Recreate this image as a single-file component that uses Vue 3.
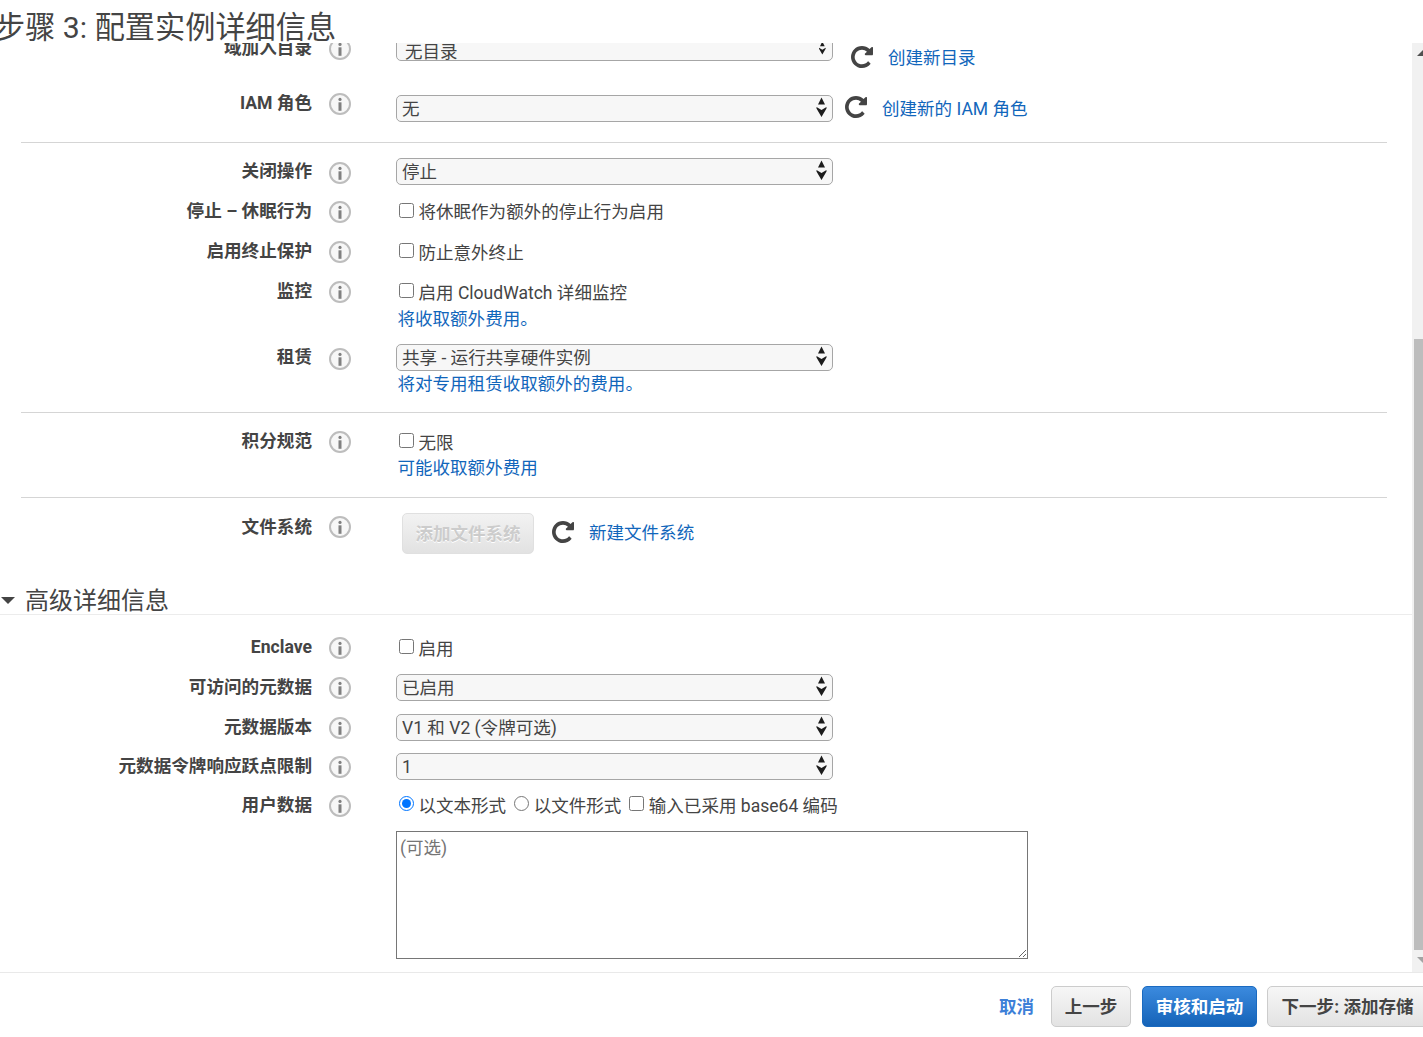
<script setup>
import { ref } from 'vue'
const domain = ref('无目录')
const tips = ['无目录']
</script>

<template>
  <div class="page">
    <svg class="defs" aria-hidden="true">
      <symbol id="info" viewBox="0 0 22 22">
        <circle cx="11" cy="11" r="10" fill="#f7f7f7" stroke="#bdbdbd" stroke-width="2" />
        <circle cx="11" cy="6.400" r="1.600" fill="#808080" />
        <rect x="9.500" y="9.300" width="3" height="8.500" fill="#808080" />
      </symbol>
      <symbol id="refresh" viewBox="128 128 1536 1536">
        <path fill="#444" d="M1664 256v448q0 26-19 45t-45 19h-448q-42 0-59-40-17-39 14-69l138-138q-148-137-349-137-104 0-198.5 40.5t-163.5 109.5-109.5 163.5-40.5 198.5 40.5 198.5 109.5 163.5 163.5 109.5 198.5 40.5q119 0 225-52t179-147q7-10 23-12 15 0 25 9l137 138q9 8 9.5 20.5t-7.5 22.5q-109 132-264 204.5t-327 72.5q-156 0-298-61t-245-164-164-245-61-298 61-298 164-245 245-164 298-61q147 0 284.5 55.5t244.5 156.5l130-129q29-31 70-14 39 17 39 59z" />
      </symbol>
      <symbol id="arrows" viewBox="0 0 12 22">
        <path d="M6.500 0.500l3.500 7H3z" fill="#1c1c1c" />
        <path d="M1.500 10l5 3 5-3v1.500l-5 8.500-5-8.500z" fill="#1c1c1c" />
      </symbol>
    </svg>

    <header class="head"><h1 class="title">步骤 3: 配置实例详细信息</h1></header>

    <main class="scroller">
      <div class="content">
        <div class="row h59">
          <div class="label">域加入目录</div>
          <svg class="info"><use href="#info" /></svg>
          <div class="ctl">
            <div class="sel-wrap up2">
              <select v-model="domain" class="sel sel-in"><option v-for="t in tips" :key="t">{{ t }}</option></select>
              <svg class="arr arr-top"><use href="#arrows" /></svg>
            </div>
            <svg class="refresh ml18 dn10"><use href="#refresh" /></svg>
            <a class="link ml15 dn10">创建新目录</a>
          </div>
        </div>

        <div class="row h41">
          <div class="label">IAM 角色</div>
          <svg class="info"><use href="#info" /></svg>
          <div class="ctl">
            <div class="sel-wrap dn4">
              <select class="sel"><option>无</option></select>
              <svg class="arr"><use href="#arrows" /></svg>
            </div>
            <svg class="refresh ml12 dn5"><use href="#refresh" /></svg>
            <a class="link ml15 dn6">创建新的 IAM 角色</a>
          </div>
        </div>
        <hr class="rule" />

        <div class="row h40">
          <div class="label">关闭操作</div>
          <svg class="info i3"><use href="#info" /></svg>
          <div class="ctl">
            <div class="sel-wrap up1">
              <select class="sel"><option>停止</option></select>
              <svg class="arr"><use href="#arrows" /></svg>
            </div>
          </div>
        </div>
        <div class="row h40">
          <div class="label">停止 – 休眠行为</div>
          <svg class="info"><use href="#info" /></svg>
          <div class="ctl col">
            <label class="check"><input type="checkbox" class="box" />将休眠作为额外的停止行为启用</label>
          </div>
        </div>
        <div class="row h40">
          <div class="label">启用终止保护</div>
          <svg class="info"><use href="#info" /></svg>
          <div class="ctl col">
            <label class="check lo"><input type="checkbox" class="box" />防止意外终止</label>
          </div>
        </div>
        <div class="row h66">
          <div class="label">监控</div>
          <svg class="info"><use href="#info" /></svg>
          <div class="ctl col">
            <label class="check lo"><input type="checkbox" class="box" />启用 CloudWatch 详细监控</label>
            <a class="link under">将收取额外费用。</a>
          </div>
        </div>
        <div class="row h57">
          <div class="label">租赁</div>
          <svg class="info i3"><use href="#info" /></svg>
          <div class="ctl col">
            <div class="sel-wrap up1">
              <select class="sel"><option>共享 - 运行共享硬件实例</option></select>
              <svg class="arr"><use href="#arrows" /></svg>
            </div>
            <a class="link under-sel">将对专用租赁收取额外的费用。</a>
          </div>
        </div>
        <hr class="rule" />

        <div class="row h58">
          <div class="label">积分规范</div>
          <svg class="info"><use href="#info" /></svg>
          <div class="ctl col">
            <label class="check lo"><input type="checkbox" class="box" />无限</label>
            <a class="link under-sel">可能收取额外费用</a>
          </div>
        </div>
        <hr class="rule" />

        <div class="row h40">
          <div class="label low">文件系统</div>
          <svg class="info"><use href="#info" /></svg>
          <div class="ctl">
            <button class="btn add" disabled>添加文件系统</button>
            <svg class="refresh ml18 dn7"><use href="#refresh" /></svg>
            <a class="link ml15 dn7">新建文件系统</a>
          </div>
        </div>

        <h2 class="section"><span class="caret"></span>高级详细信息</h2>

        <div class="row h40">
          <div class="label">Enclave</div>
          <svg class="info"><use href="#info" /></svg>
          <div class="ctl col">
            <label class="check lo"><input type="checkbox" class="box" />启用</label>
          </div>
        </div>
        <div class="row h40">
          <div class="label">可访问的元数据</div>
          <svg class="info"><use href="#info" /></svg>
          <div class="ctl">
            <div class="sel-wrap up1">
              <select class="sel"><option>已启用</option></select>
              <svg class="arr"><use href="#arrows" /></svg>
            </div>
          </div>
        </div>
        <div class="row h39">
          <div class="label">元数据版本</div>
          <svg class="info"><use href="#info" /></svg>
          <div class="ctl">
            <div class="sel-wrap up1">
              <select class="sel"><option>V1 和 V2 (令牌可选)</option></select>
              <svg class="arr"><use href="#arrows" /></svg>
            </div>
          </div>
        </div>
        <div class="row h39">
          <div class="label">元数据令牌响应跃点限制</div>
          <svg class="info"><use href="#info" /></svg>
          <div class="ctl">
            <div class="sel-wrap up1">
              <select class="sel"><option>1</option></select>
              <svg class="arr"><use href="#arrows" /></svg>
            </div>
          </div>
        </div>
        <div class="row h38">
          <div class="label">用户数据</div>
          <svg class="info"><use href="#info" /></svg>
          <div class="ctl user">
            <label class="check"><input type="radio" name="ud" class="box" checked />以文本形式</label>
            <label class="check"><input type="radio" name="ud" class="box" />以文件形式</label>
            <label class="check"><input type="checkbox" class="box" />输入已采用 base64 编码</label>
          </div>
        </div>
        <div class="area-wrap">
          <textarea class="area" placeholder="(可选)"></textarea>
        </div>
      </div>

      <div class="scrollbar">
        <span class="sb-up"></span>
        <span class="sb-thumb"></span>
        <span class="sb-down"></span>
      </div>
    </main>

    <footer class="foot">
      <a class="cancel">取消</a>
      <button class="btn prev">上一步</button>
      <button class="btn primary">审核和启动</button>
      <button class="btn next">下一步: 添加存储</button>
    </footer>
  </div>
</template>

<style>
html, body { margin: 0; overflow: hidden; background: #fff; }
</style>

<style scoped>
.page {
  width: 1423px; height: 1037px; overflow: hidden; display: flex; flex-direction: column;
  font-family: Roboto, "Noto Sans CJK SC", sans-serif; font-size: 17.55px; color: #444; background: #fff;
}
.defs { position: absolute; width: 0; height: 0; }
.head { height: 43px; flex: none; position: relative; z-index: 2; }
.title { margin: 0 0 0 -5px; font-size: 30.2px; font-weight: 400; line-height: 55px; height: 43px; white-space: nowrap; }
.scroller { height: 929px; flex: none; position: relative; overflow: hidden; }
.content { margin-top: -7px; width: 1408px; }
.row { display: grid; grid-template-columns: 312px 22px 1fr; column-gap: 17px; align-items: start; }
.row > .ctl { margin-left: 28px; }
.h38 { height: 38px; } .h39 { height: 39px; } .h40 { height: 40px; } .h41 { height: 41px; }
.h57 { height: 57px; } .h58 { height: 58px; } .h59 { height: 55px; } .h66 { height: 66px; }
.label { text-align: right; font-size: 17.6px; font-weight: 700; line-height: 24px; white-space: nowrap; }
.low { margin-top: 1px; }
.info { width: 22px; height: 22px; margin-top: 2px; }
.i3 { margin-top: 3px; }
.ctl { display: flex; align-items: flex-start; min-width: 0; }
.col { flex-direction: column; }
.sel-wrap { position: relative; width: 437px; height: 27px; flex: none; }
.sel {
  appearance: none; -webkit-appearance: none; display: block; width: 100%; height: 100%; box-sizing: border-box;
  border: 1px solid #a6a6a6; border-radius: 5px; background: #f7f7f7; color: #444; padding: 1px 20px 0 5px; margin: 0;
  font: inherit; line-height: 24px;
}
.sel-in { padding-left: 8px; padding-top: 5px; }
.arr { position: absolute; left: 419px; top: 2px; width: 12px; height: 22px; pointer-events: none; }
.arr-top { left: 422px; top: 7px; width: 8px; height: 15px; }
.up1 { margin-top: -1px; } .up2 { margin-top: -2px; }
.dn4 { margin-top: 4px; } .dn5 { margin-top: 5px; } .dn6 { margin-top: 6px; } .dn7 { margin-top: 7px; } .dn10 { margin-top: 10px; }
.refresh { width: 22px; height: 22px; flex: none; }
.ml12 { margin-left: 12px; } .ml15 { margin-left: 15px; } .ml18 { margin-left: 18px; }
.link { color: #1166bb; line-height: 24px; white-space: nowrap; cursor: pointer; }
.under { margin: 2px 0 0 1.500px; }
.under-sel { margin: 1px 0 0 1.500px; }
.check { display: flex; align-items: flex-start; line-height: 24px; margin: 1px 0 0 3px; white-space: nowrap; }
.check.lo { margin-top: 2px; }
.box { width: 15px; height: 15px; margin: 3px 4.500px 0 0; flex: none; }
.lo .box { margin-top: 2px; }
.user { gap: 8px; }
.user .check { margin-top: 1px; }
.user .check + .check { margin-left: 0; }
.user .box { margin-top: 2px; }
.rule { height: 1px; border: 0; background: #d5d5d5; margin: 10px 36px 16px 21px; }
.row + .rule { margin-left: 21px; width: 1366px; }
.section {
  margin: 31px 0 20px; padding-top: 2px; height: 27px; width: 1423px; border-bottom: 1px solid #ececec; font-size: 24px; font-weight: 400;
  line-height: 30px; display: flex; align-items: center; white-space: nowrap; color: #444;
}
.caret { width: 0; height: 0; border: solid transparent; border-width: 7px 7px 0; border-top-color: #444; margin: 0 10px 0 1px; }
.area-wrap { padding-left: 396px; }
.area {
  display: block; box-sizing: border-box; width: 632px; height: 128px; border: 1px solid #767676; border-radius: 0; padding: 4px 3px 3px;
  margin: 0; font: inherit; line-height: 24px; color: #444; background: #fff;
}
.area::placeholder { color: #757575; }
.scrollbar { position: absolute; left: 1412px; top: 0; bottom: 0; width: 11px; background: #f1f1f1; }
.sb-up { position: absolute; left: 5px; top: 7px; width: 0; height: 0; border: solid transparent; border-width: 0 6px 6px; border-bottom-color: #505050; }
.sb-down { position: absolute; left: 5px; top: 914px; width: 0; height: 0; border: solid transparent; border-width: 6px 6px 0; border-top-color: #a3a3a3; }
.sb-thumb { position: absolute; left: 2px; top: 296px; width: 11px; height: 611px; background: #bdbdbd; }
.foot {
  flex: 1; box-sizing: border-box; border-top: 1px solid #e9e9e9; display: flex; align-items: flex-start;
  padding: 13px 0 0 999px; white-space: nowrap; overflow: hidden;
}
.cancel { font-weight: 700; color: #3d80d8; line-height: 24px; margin: 9px 17px 0 0; cursor: pointer; }
.btn {
  box-sizing: border-box; height: 41px; border: 1px solid #ccc; border-radius: 5px; padding: 0 0 3px; font: inherit; font-weight: 700;
  background: linear-gradient(#f6f6f6, #e3e3e3); color: #444; flex: none;
}
.add {
  margin: -1px 0 0 6px; width: 132px; height: 41px; background: linear-gradient(#f2f2f2, #e2e2e2);
  border-color: #e0e0e0; color: #ccc; text-shadow: 0 1px 0 #fff;
}
.prev { width: 80px; }
.primary { width: 115px; margin-left: 11px; background: linear-gradient(#3b8ade, #1563b8); border-color: #1a6ac0; color: #fff; }
.next { width: 161px; margin-left: 10px; }
</style>
